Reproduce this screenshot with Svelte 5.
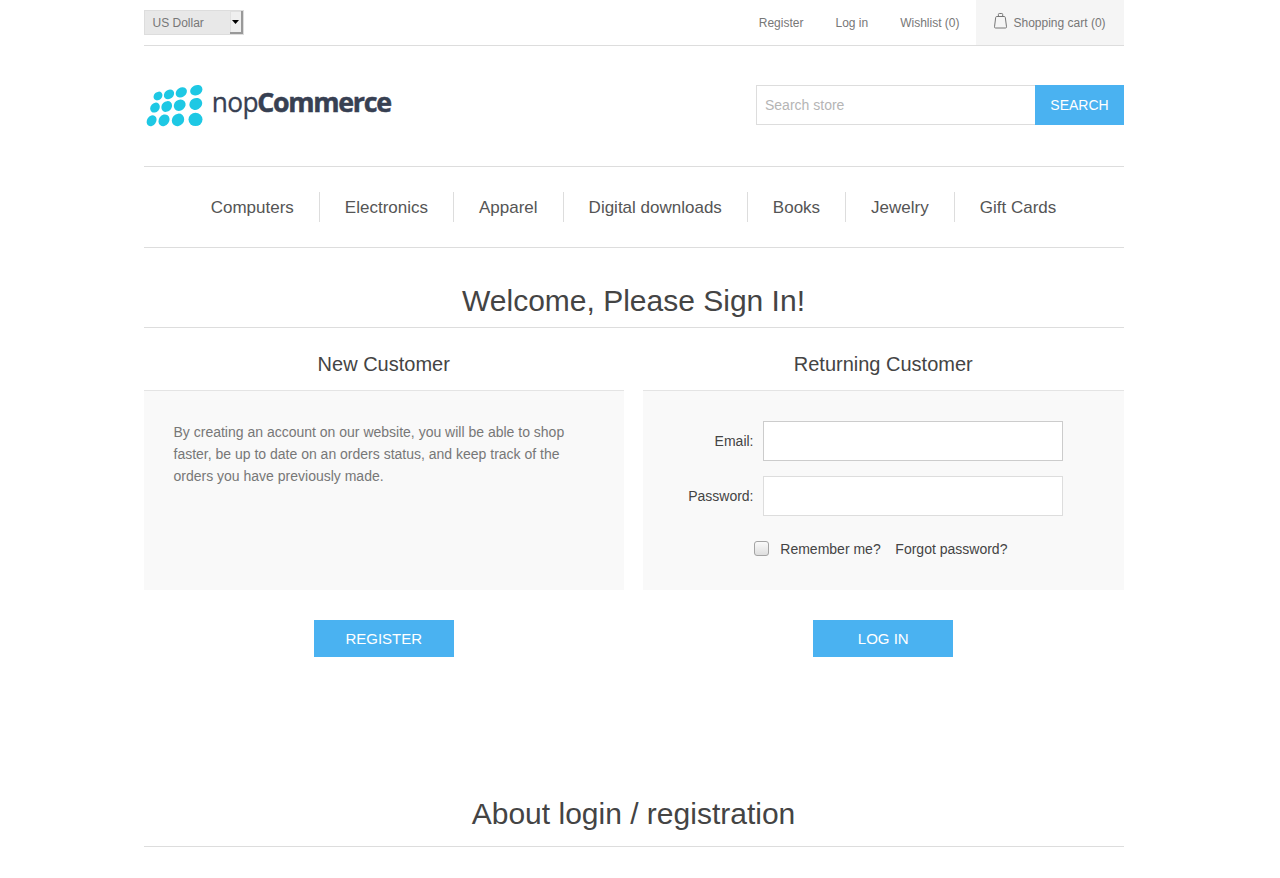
<script>
  const categories = ['Computers', 'Electronics', 'Apparel', 'Digital downloads', 'Books', 'Jewelry', 'Gift Cards'];
  const dots = [
    [18, 18, 4.8, 4, -42], [29, 16.4, 5.5, 4.5, -40], [41.3, 14.4, 6, 4.7, -34], [56.3, 12.2, 6.4, 5, -26],
    [15, 29.6, 5.4, 4.4, -50], [26.7, 28.5, 5.8, 4.9, -46], [39.7, 27.2, 6.3, 5.4, -40], [55.8, 25.9, 6.6, 5.8, -28],
    [11.6, 42.7, 5.8, 4.6, -56], [24, 42.3, 6.2, 5.2, -54], [38, 41.9, 6.6, 5.9, -48], [55.5, 41.4, 7, 6.7, 0]
  ];
  let search = $state('');
  let email = $state('');
  let password = $state('');
  let remember = $state(false);
</script>

<div class="page">
  <header>
    <div class="top">
      <div class="currency">
        <span>US Dollar</span>
        <i><svg width="7" height="4" viewBox="0 0 7 4"><path d="M0 0h7L3.5 4z" /></svg></i>
      </div>
      <nav class="links">
        <a href="#register">Register</a>
        <a href="#login">Log in</a>
        <a href="#wishlist">Wishlist (0)</a>
        <a href="#cart" class="cart">
          <svg width="14" height="17" viewBox="0 0 14 17" fill="none" stroke="#777" stroke-width="1">
            <path d="M2.7 4.5h7.6q.9 0 1 .9l1.2 9.4q.1 1.2-1 1.2h-10q-1.1 0-1-1.2l1.2-9.4q.1-.9 1-.9z" />
            <path d="M4.4 4.5V2.4q0-.9.9-.9h2.5q.9 0 .9.9v2.1" />
          </svg>
          <span>Shopping cart (0)</span>
        </a>
      </nav>
    </div>
    <div class="brand">
      <svg class="logo" width="260" height="50" viewBox="0 0 260 50" aria-label="nopCommerce">
        <g fill="#1ec8e4" transform="translate(-4 -3)">
          {#each dots as [x, y, rx, ry, turn]}
            <ellipse cx={x} cy={y} {rx} {ry} transform="rotate({turn} {x} {y})" />
          {/each}
        </g>
        <g fill="#374052" stroke="#374052" font-family="'Open Sans', 'Noto Sans', sans-serif" font-size="27">
          <text x="67.8" y="31" letter-spacing="-.7" textLength="46" lengthAdjust="spacingAndGlyphs" stroke-width=".3">nop</text>
          <text x="113.2" y="31" font-weight="700" letter-spacing="-1.3" textLength="133.6" lengthAdjust="spacingAndGlyphs" stroke-width=".5">Commerce</text>
        </g>
      </svg>
      <form class="search" onsubmit={(e) => e.preventDefault()}>
        <input type="text" placeholder="Search store" bind:value={search} />
        <button>SEARCH</button>
      </form>
    </div>
  </header>

  <nav class="menu">
    {#each categories as name}<a href="#category">{name}</a>{/each}
  </nav>

  <main>
    <h1>Welcome, Please Sign In!</h1>
    <div class="columns">
      <section>
        <h2>New Customer</h2>
        <div class="panel intro">
          By creating an account on our website, you will be able to shop faster, be up to date on an orders status, and keep track of the orders you have previously made.
        </div>
        <button class="action">REGISTER</button>
      </section>
      <section>
        <h2>Returning Customer</h2>
        <div class="panel">
          <div class="field">
            <label for="email">Email:</label>
            <input id="email" class="active" type="text" bind:value={email} />
          </div>
          <div class="field">
            <label for="password">Password:</label>
            <input id="password" type="password" bind:value={password} />
          </div>
          <div class="options">
            <input id="remember" type="checkbox" bind:checked={remember} />
            <label for="remember">Remember me?</label>
            <a href="#recovery">Forgot password?</a>
          </div>
        </div>
        <button class="action">LOG IN</button>
      </section>
    </div>
    <h1 class="about">About login / registration</h1>
  </main>
</div>

<style>
  :global(body) {
    background: #fff;
    padding-right: 13px;
    overflow: hidden;
    font: 14px 'Liberation Sans', Arial, sans-serif;
    color: #777;
  }
  * { box-sizing: border-box; }
  a { color: inherit; text-decoration: none; }
  input, button { font: inherit; margin: 0; border-radius: 0; outline: none; }
  button { border: 0; background: #4ab2f1; color: #fff; padding: 0; }
  h1, h2 { margin: 0; font-weight: 400; text-align: center; color: #444; }

  .page { width: 980px; margin: 0 auto; height: 878px; overflow: hidden; }
  .top {
    height: 46px;
    display: flex;
    justify-content: space-between;
    border-bottom: 1px solid #ddd;
    font-size: 12px;
  }
  .currency {
    width: 100px;
    height: 25px;
    margin-top: 10px;
    border: 1px solid #ddd;
    background: #e8e8e8;
    display: flex;
    justify-content: space-between;
    align-items: center;
    padding-left: 8px;
  }
  .currency i {
    width: 13px;
    height: 23px;
    display: grid;
    place-items: center;
    padding-left: 1px;
    background: #efefef;
    border: solid #999;
    border-width: 0 2px 2px 0;
    box-shadow: inset 1px 1px #e0e0e0;
  }
  .currency svg { fill: #000; }
  .links { display: flex; line-height: 46px; height: 45px; }
  .links a { padding: 0 16px; }
  .links .cart { width: 148px; padding: 0 18px; background: #f5f5f5; display: flex; gap: 6px; white-space: nowrap; }
  .cart svg { margin-top: 12px; flex: none; }

  .brand { height: 120px; display: flex; justify-content: space-between; padding-top: 35px; }
  .search { display: flex; height: 40px; margin-top: 4px; }
  .search input { width: 279px; border: 1px solid #ddd; border-right: 0; padding: 0 8px 0 8.5px; color: #777; }
  .search input::placeholder { color: #b5b5b5; opacity: 1; }
  .search button { width: 89px; padding-left: 1px; }

  .menu {
    height: 82px;
    border: solid #ddd;
    border-width: 1px 0;
    display: flex;
    justify-content: center;
    align-items: center;
    font-size: 17px;
    color: #555;
  }
  .menu a { padding: 0 25px; height: 30px; line-height: 32px; }
  .menu a + a { border-left: 1px solid #ddd; }

  h1 { height: 80px; padding-top: 35px; line-height: 36px; font-size: 30px; border-bottom: 1px solid #ddd; }
  h1.about { margin-top: 110px; padding-top: 29px; }
  .columns { display: flex; justify-content: space-between; }
  section { width: 480.5px; }
  h2 { height: 62px; padding-top: 24px; line-height: 24px; font-size: 20px; }
  .panel { height: 200px; border-top: 1px solid #e4e4e4; background: #f9f9f9; padding-top: 30px; color: #444; }
  .intro { padding: 30px 30px 0; line-height: 22px; color: #777; }
  .field { display: flex; align-items: center; margin-bottom: 15px; }
  .field label { width: 110.5px; text-align: right; margin-right: 9.5px; }
  .field input { width: 300px; height: 40px; border: 1px solid #ddd; background: #fff; }
  .field .active { border-color: #ccc; }
  .options { display: flex; align-items: center; height: 16px; margin: 25px 0 0 111px; }
  .options input {
    appearance: none;
    width: 15px;
    height: 15px;
    margin-bottom: 1px;
    border: 1px solid #a4a4a4;
    border-radius: 3px;
    background: linear-gradient(#fafafa, #dedede);
  }
  .options label { margin: 0 14.7px 0 11.3px; }
  .action { display: block; width: 140px; height: 37px; margin: 30px auto 0; font-size: 15px; }
</style>
